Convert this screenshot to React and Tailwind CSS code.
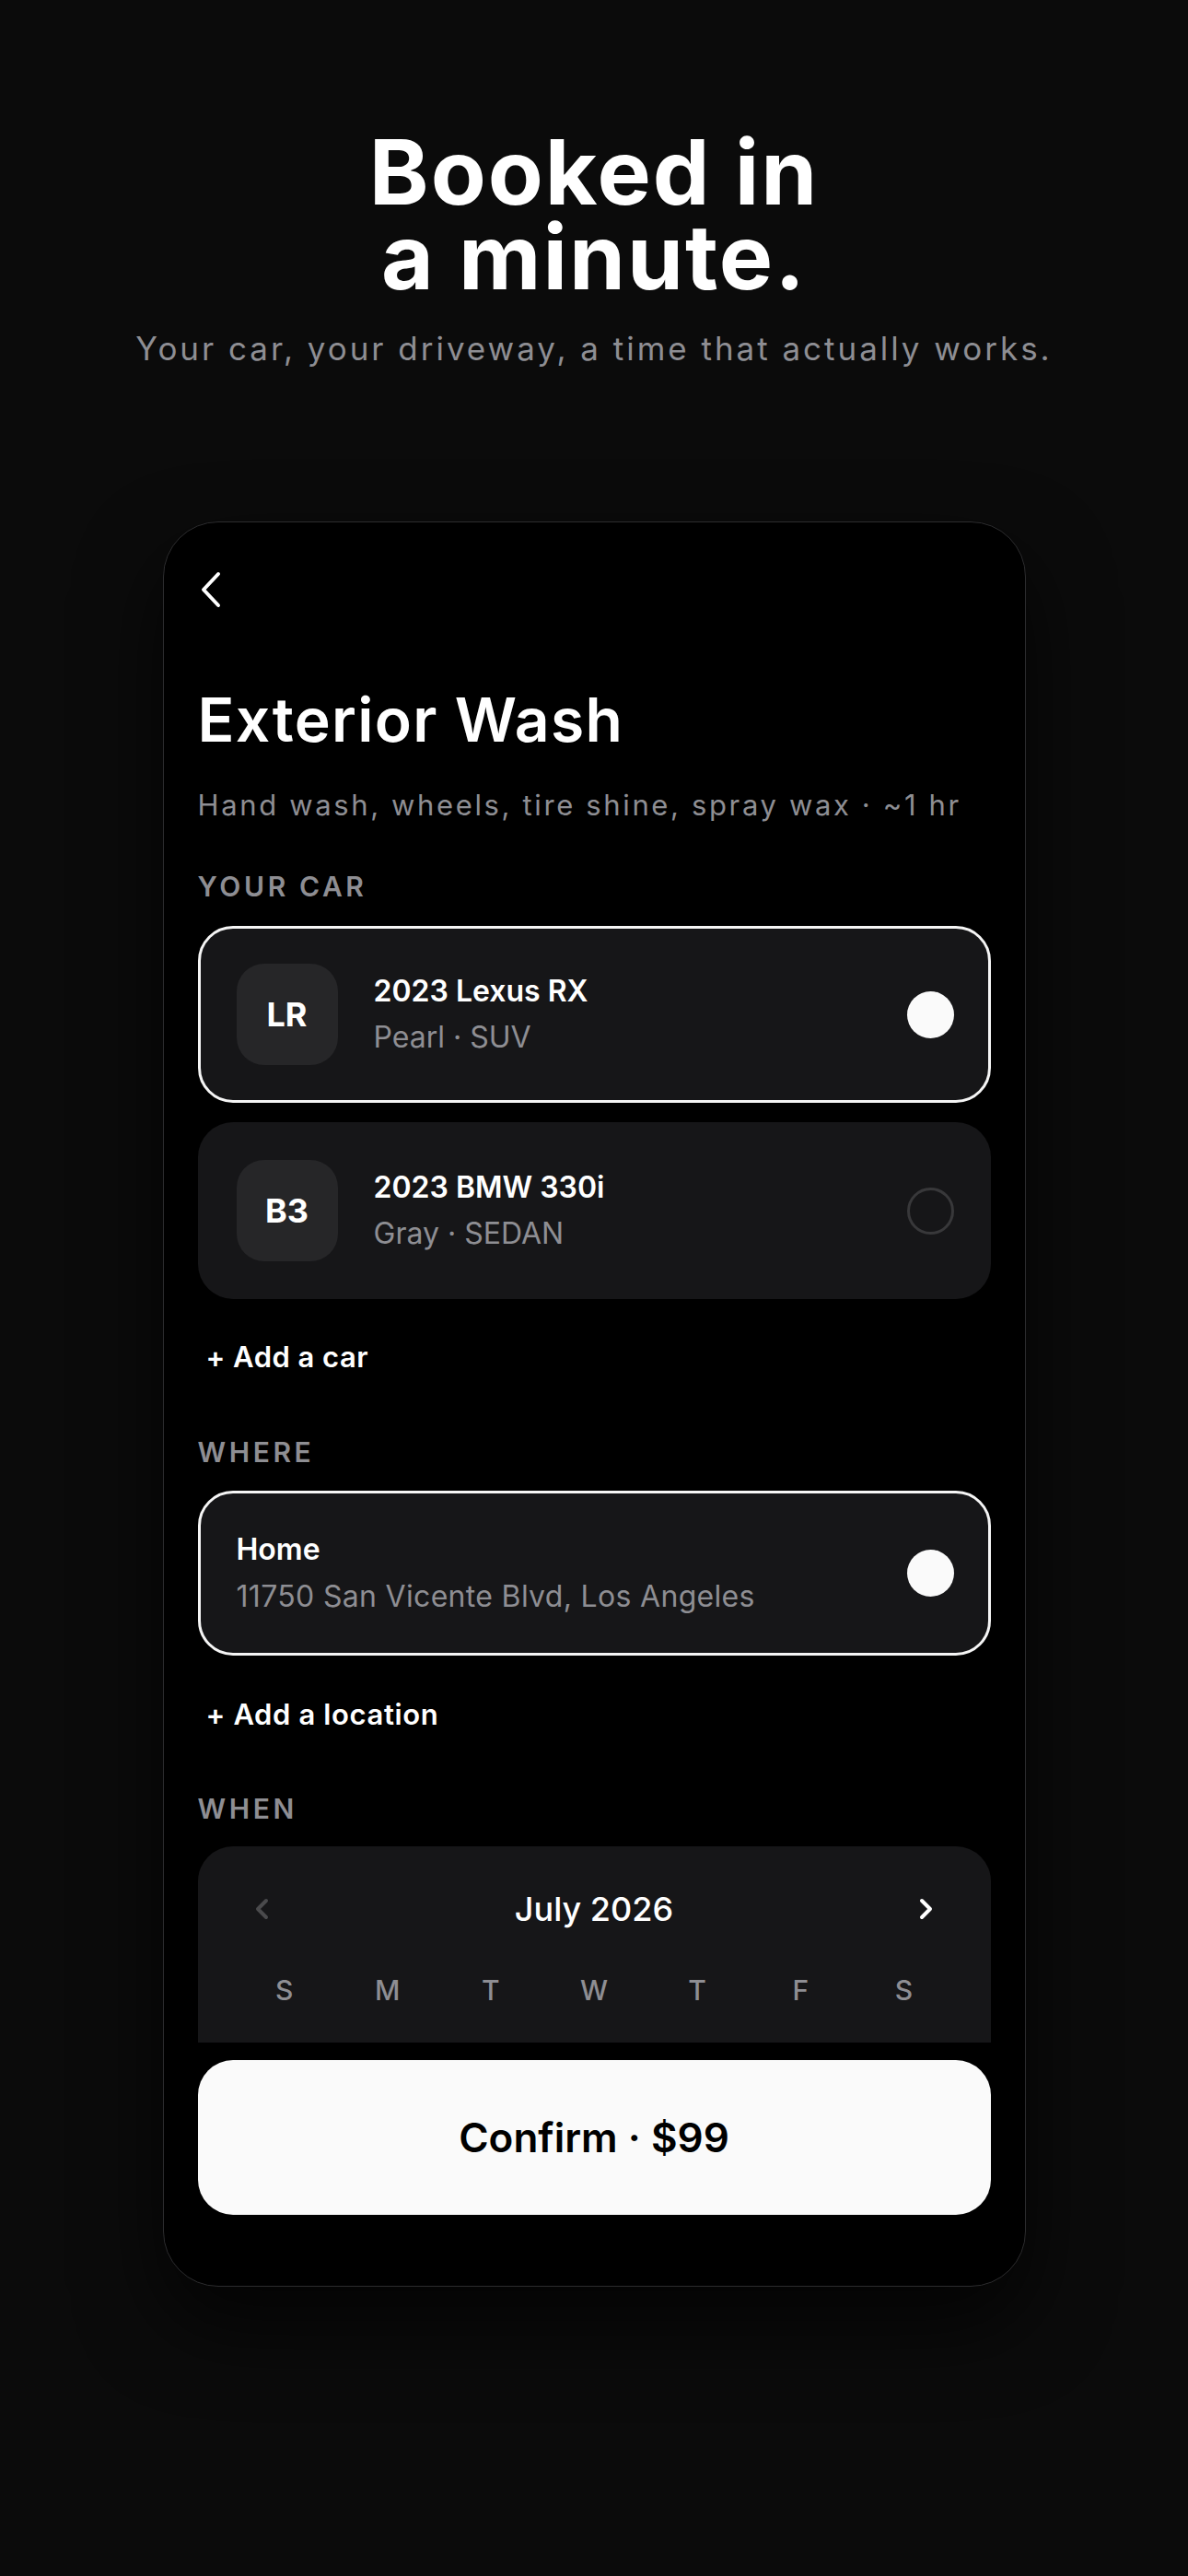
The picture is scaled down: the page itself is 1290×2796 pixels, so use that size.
import React from 'react';

const cars = [
  { initials: 'LR', name: '2023 Lexus RX', detail: 'Pearl · SUV', selected: true },
  { initials: 'B3', name: '2023 BMW 330i', detail: 'Gray · SEDAN', selected: false },
];

const weekdays = ['S', 'M', 'T', 'W', 'T', 'F', 'S'];

function Radio({ on }) {
  if (on) {
    return <div className="w-[51px] h-[51px] rounded-full bg-[#fafafa] shrink-0" />;
  }
  return <div className="w-[51px] h-[51px] rounded-full border-[3px] border-[#38383a] shrink-0" />;
}

function CarCard({ car }) {
  return (
    <div
      className={
        'h-[192px] flex items-center pl-[39px] pr-[37px] rounded-[38px] bg-[#161618] border-[3px] ' +
        (car.selected ? 'border-[#f5f5f5]' : 'border-transparent')
      }
    >
      <div className="w-[110px] h-[110px] rounded-[30px] bg-[#262628] flex items-center justify-center shrink-0">
        <span className="text-[36px] font-bold text-white leading-none">{car.initials}</span>
      </div>
      <div className="flex flex-col gap-[10px] ml-[39px] flex-1">
        <span className="text-[32px] leading-[40px] font-semibold text-white">{car.name}</span>
        <span className="text-[32px] leading-[40px] text-[#8e8e93]">{car.detail}</span>
      </div>
      <Radio on={car.selected} />
    </div>
  );
}

function SectionLabel({ children, className }) {
  return (
    <div className={'text-[30px] leading-[36px] font-semibold tracking-[0.12em] text-[#8e8e93] ' + className}>
      {children}
    </div>
  );
}

export default function App() {
  return (
    <div className="min-h-[2796px] bg-[#0b0b0b] font-[Inter,sans-serif] text-white flex flex-col items-center">
      {/* headline */}
      <h1 className="mt-[141px] text-[98px] leading-[92px] font-bold text-center tracking-[0.02em]">
        <span className="block">Booked in</span>
        <span className="block">a minute.</span>
      </h1>
      <p className="mt-[33px] text-[35px] leading-[40px] text-[#8e8e93] text-center tracking-[0.085em]">
        Your car, your driveway, a time that actually works.
      </p>

      {/* phone frame */}
      <div className="mt-[168px] w-[937px] h-[1916px] rounded-[60px] border border-[#2c2c2e] bg-black flex flex-col overflow-hidden shadow-[0_40px_90px_rgba(0,0,0,0.7)]">
        <div className="h-[1650px] overflow-hidden px-[37px] pt-[53px]">
          <svg width="24" height="40" viewBox="0 0 24 40" className="ml-[2px]">
            <path d="M20 3 L4 20 L20 37" fill="none" stroke="white" strokeWidth="4" strokeLinecap="round" strokeLinejoin="round" />
          </svg>

          <h2 className="mt-[81px] text-[66px] leading-[80px] font-semibold tracking-[0.02em]">Exterior Wash</h2>
          <p className="mt-[33px] text-[31px] leading-[40px] text-[#8e8e93] tracking-[0.085em] whitespace-nowrap">
            Hand wash, wheels, tire shine, spray wax · ~1 hr
          </p>

          <SectionLabel className="mt-[50px]">YOUR CAR</SectionLabel>
          <div className="mt-[25px] flex flex-col gap-[21px]">
            {cars.map((car) => (
              <CarCard key={car.name} car={car} />
            ))}
          </div>
          <button type="button" className="mt-[43px] ml-[9px] block text-[31px] leading-[40px] font-semibold text-white tracking-[0.015em]">
            + Add a car
          </button>

          <SectionLabel className="mt-[65px]">WHERE</SectionLabel>
          <div className="mt-[24px] h-[179px] flex items-center pl-[39px] pr-[37px] rounded-[38px] bg-[#161618] border-[3px] border-[#f5f5f5]">
            <div className="flex flex-col gap-[11px] flex-1">
              <span className="text-[32px] leading-[40px] font-semibold">Home</span>
              <span className="text-[32px] leading-[40px] text-[#8e8e93] tracking-[0.01em]">11750 San Vicente Blvd, Los Angeles</span>
            </div>
            <Radio on />
          </div>
          <button type="button" className="mt-[44px] ml-[9px] block text-[31px] leading-[40px] font-semibold text-white tracking-[0.02em]">
            + Add a location
          </button>

          <SectionLabel className="mt-[64px]">WHEN</SectionLabel>
          <div className="mt-[23px] h-[420px] rounded-[38px] bg-[#161618] pt-[46px]">
            <div className="flex items-center justify-between px-[60px] h-[44px]">
              <svg width="18" height="24" viewBox="0 0 18 24">
                <path d="M14 3 L5 12 L14 21" fill="none" stroke="#4a4a4c" strokeWidth="4" strokeLinecap="round" strokeLinejoin="round" />
              </svg>
              <span className="text-[36px] leading-[44px] font-medium">July 2026</span>
              <svg width="18" height="24" viewBox="0 0 18 24">
                <path d="M4 3 L13 12 L4 21" fill="none" stroke="white" strokeWidth="4" strokeLinecap="round" strokeLinejoin="round" />
              </svg>
            </div>
            <div className="mt-[48px] px-[38px] grid grid-cols-7">
              {weekdays.map((d, i) => (
                <span key={i} className="text-center text-[30px] leading-[36px] font-medium text-[#8e8e93]">
                  {d}
                </span>
              ))}
            </div>
          </div>
        </div>

        <div className="px-[37px] pt-[19px]">
          <button type="button" className="w-full h-[168px] rounded-[38px] bg-[#fafafa] text-black text-[44px] font-semibold">
            Confirm · $99
          </button>
        </div>
      </div>
    </div>
  );
}
